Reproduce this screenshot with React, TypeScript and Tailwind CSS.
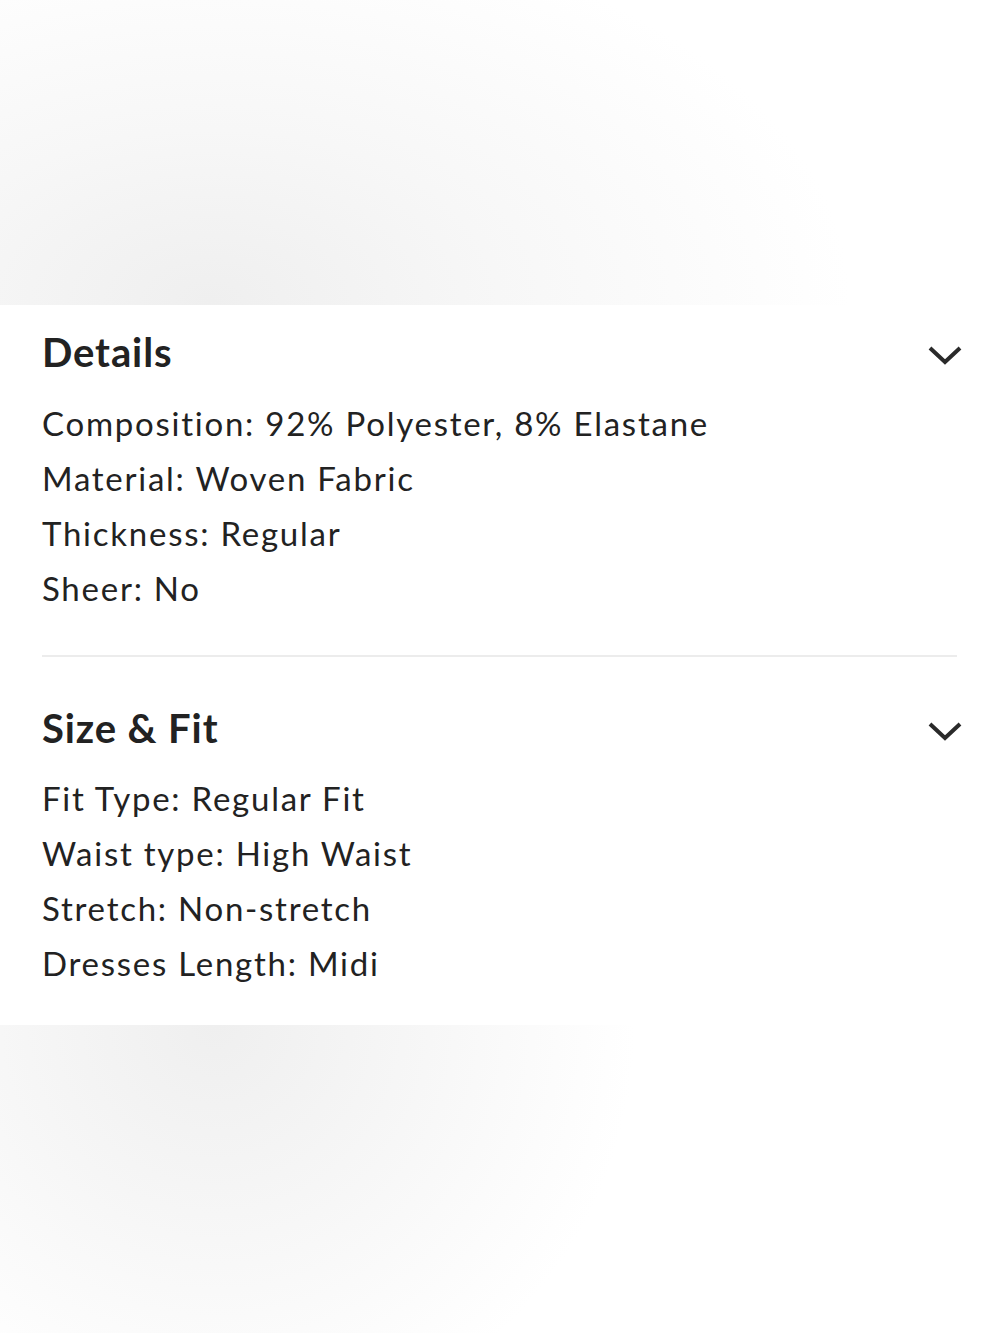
import React from "react";

function Chevron() {
  return (
    <svg width="36" height="24" viewBox="0 0 36 24" fill="none" className="shrink-0">
      <path d="M3 5 L18 19 L33 5" stroke="#2a2a2a" strokeWidth="4" strokeLinecap="butt" strokeLinejoin="miter" />
    </svg>
  );
}

function Section({ title, items, top, bodyTop }: { title: string; items: string[]; top: string; bodyTop: string }) {
  return (
    <div className={top}>
      <div className="flex items-center justify-between h-12">
        <h2 className="text-[40px] font-bold leading-[48px] tracking-[0.9px] text-[#222]">{title}</h2>
        <div className="mr-[-5px] mt-[6px]">
          <Chevron />
        </div>
      </div>
      <ul className={bodyTop}>
        {items.map((t) => (
          <li key={t} className="text-[33px] leading-[55px] tracking-[1.75px] text-[#222]">
            {t}
          </li>
        ))}
      </ul>
    </div>
  );
}

export default function App() {
  return (
    <div
      className="w-[1000px] h-[1333px] bg-white flex flex-col [font-variant-ligatures:none]"
      style={{ fontFamily: "Lato, 'Open Sans', sans-serif" }}
    >
      <div className="h-[305px] bg-[radial-gradient(ellipse_640px_380px_at_210px_300px,#efefef_0%,#f7f7f7_45%,#ffffff_100%)]" />
      <div className="bg-white px-[42px] pt-[23px] pb-[34px]">
        <Section
          title="Details"
          top=""
          bodyTop="mt-[20px]"
          items={[
            "Composition: 92% Polyester, 8% Elastane",
            "Material: Woven Fabric",
            "Thickness: Regular",
            "Sheer: No",
          ]}
        />
        <div className="mt-[39px] mr-[1px] h-[2px] bg-[#ececec]" />
        <Section
          title="Size & Fit"
          top="mt-[47px]"
          bodyTop="mt-[19px]"
          items={[
            "Fit Type: Regular Fit",
            "Waist type: High Waist",
            "Stretch: Non-stretch",
            "Dresses Length: Midi",
          ]}
        />
      </div>
      <div className="flex-1 bg-[radial-gradient(ellipse_420px_420px_at_215px_0px,#efefef_0%,#f6f6f6_45%,#ffffff_100%)]" />
    </div>
  );
}
